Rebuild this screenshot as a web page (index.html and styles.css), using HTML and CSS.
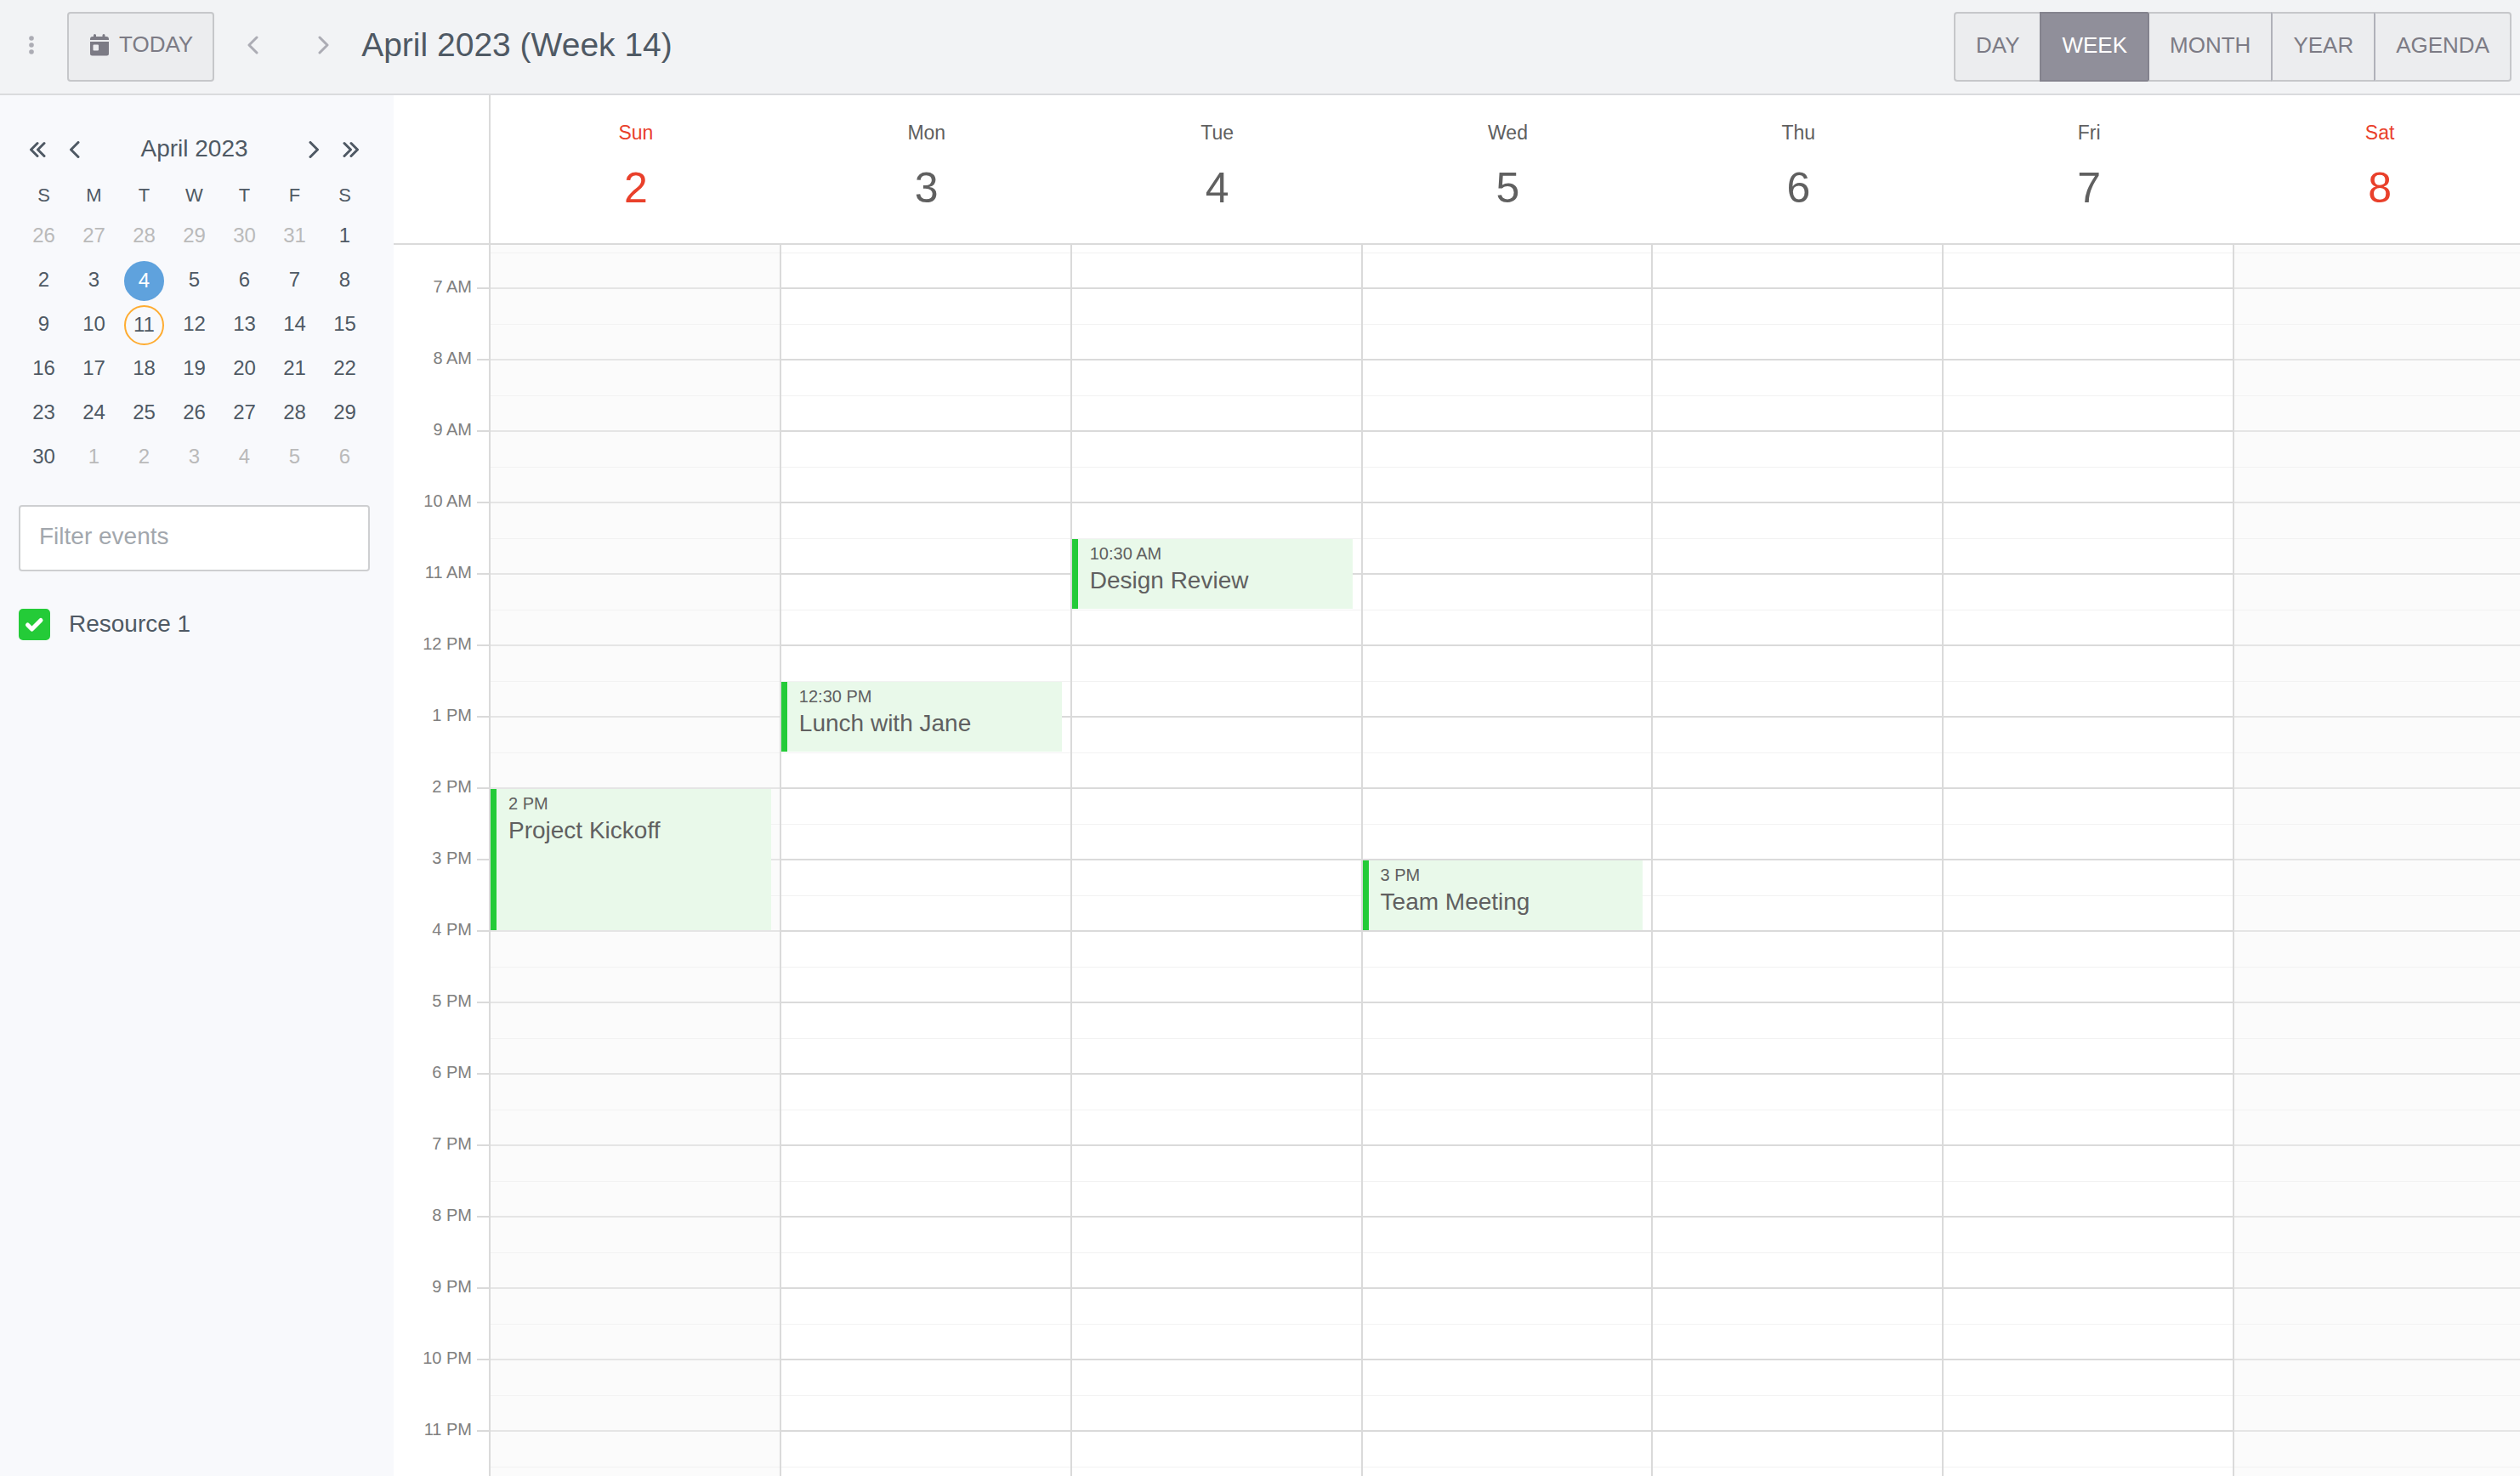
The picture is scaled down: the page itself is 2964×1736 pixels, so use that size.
FILE: index.html
```html
<!DOCTYPE html>
<html lang="en">
<head>
<meta charset="utf-8">
<title>April 2023 (Week 14)</title>
<link rel="stylesheet" href="styles.css">
</head>
<body>
<header class="toolbar">
  <button class="icon-btn menu-btn" type="button" aria-label="Toggle sidebar">
    <svg width="8" height="24" viewBox="0 0 8 24"><circle cx="4" cy="4" r="2.8"/><circle cx="4" cy="12" r="2.8"/><circle cx="4" cy="20" r="2.8"/></svg>
  </button>
  <button class="today-btn" type="button">
    <svg width="22" height="26" viewBox="0 0 22 26"><path fill-rule="evenodd" d="M0 7V6a3 3 0 0 1 3-3h1V1.500a1.500 1.500 0 0 1 3 0V3h7.500V1.500a1.500 1.500 0 0 1 3 0V3H19a3 3 0 0 1 3 3v1zM0 9h22v14a2.500 2.500 0 0 1-2.500 2.500h-17A2.500 2.500 0 0 1 0 23zM4.500 12.500a1 1 0 0 0-1 1v5a1 1 0 0 0 1 1h4.500a1 1 0 0 0 1-1v-5a1 1 0 0 0-1-1z"/></svg>
    <span>TODAY</span>
  </button>
  <button class="icon-btn step-btn" type="button" aria-label="Previous week">
    <svg width="14" height="24" viewBox="0 0 14 24"><path d="M12 3L3 12l9 9"/></svg>
  </button>
  <button class="icon-btn step-btn" type="button" aria-label="Next week">
    <svg width="14" height="24" viewBox="0 0 14 24"><path d="M2 3l9 9-9 9"/></svg>
  </button>
  <h1 class="title">April 2023 (Week 14)</h1>
  <div class="views" role="group" aria-label="View">
    <button type="button">DAY</button>
    <button type="button" class="active" aria-pressed="true">WEEK</button>
    <button type="button">MONTH</button>
    <button type="button">YEAR</button>
    <button type="button">AGENDA</button>
  </div>
</header>
<main class="main">
  <aside class="sidebar">
    <div class="mini-nav">
      <button type="button" aria-label="Previous year"><svg width="20" height="20" viewBox="0 0 20 20"><path d="M10 2.500L2.500 10l7.500 7.500M18 2.500L10.500 10l7.500 7.500"/></svg></button>
      <button type="button" aria-label="Previous month"><svg width="20" height="20" viewBox="0 0 20 20"><path d="M14 1.500L5.500 10l8.500 8.500"/></svg></button>
      <h2>April 2023</h2>
      <button type="button" aria-label="Next month"><svg width="20" height="20" viewBox="0 0 20 20"><path d="M6 1.500L14.500 10l-8.500 8.500"/></svg></button>
      <button type="button" aria-label="Next year"><svg width="20" height="20" viewBox="0 0 20 20"><path d="M2 2.500L9.500 10 2 17.500M10 2.500l7.500 7.500-7.500 7.500"/></svg></button>
    </div>
    <table class="mini-cal">
      <thead><tr><th>S</th><th>M</th><th>T</th><th>W</th><th>T</th><th>F</th><th>S</th></tr></thead>
      <tbody>
        <tr><td class="other">26</td><td class="other">27</td><td class="other">28</td><td class="other">29</td><td class="other">30</td><td class="other">31</td><td>1</td></tr>
        <tr><td>2</td><td>3</td><td><span class="day selected">4</span></td><td>5</td><td>6</td><td>7</td><td>8</td></tr>
        <tr><td>9</td><td>10</td><td><span class="day today">11</span></td><td>12</td><td>13</td><td>14</td><td>15</td></tr>
        <tr><td>16</td><td>17</td><td>18</td><td>19</td><td>20</td><td>21</td><td>22</td></tr>
        <tr><td>23</td><td>24</td><td>25</td><td>26</td><td>27</td><td>28</td><td>29</td></tr>
        <tr><td>30</td><td class="other">1</td><td class="other">2</td><td class="other">3</td><td class="other">4</td><td class="other">5</td><td class="other">6</td></tr>
      </tbody>
    </table>
    <input class="filter" type="text" placeholder="Filter events" aria-label="Filter events">
    <label class="resource">
      <input type="checkbox" checked>
      <svg class="check" width="37" height="37" viewBox="0 0 37 37"><path d="M10.500 19l5 5L26 13.500"/></svg>
      <span>Resource 1</span>
    </label>
  </aside>
  <section class="week">
    <div class="week-head">
      <div class="head-axis"></div>
      <div class="days">
        <div class="head-day weekend"><span>Sun</span><strong>2</strong></div>
        <div class="head-day"><span>Mon</span><strong>3</strong></div>
        <div class="head-day"><span>Tue</span><strong>4</strong></div>
        <div class="head-day"><span>Wed</span><strong>5</strong></div>
        <div class="head-day"><span>Thu</span><strong>6</strong></div>
        <div class="head-day"><span>Fri</span><strong>7</strong></div>
        <div class="head-day weekend"><span>Sat</span><strong>8</strong></div>
      </div>
    </div>
    <div class="week-body">
      <div class="axis">
        <div class="hour"><span>7 AM</span></div>
        <div class="hour"><span>8 AM</span></div>
        <div class="hour"><span>9 AM</span></div>
        <div class="hour"><span>10 AM</span></div>
        <div class="hour"><span>11 AM</span></div>
        <div class="hour"><span>12 PM</span></div>
        <div class="hour"><span>1 PM</span></div>
        <div class="hour"><span>2 PM</span></div>
        <div class="hour"><span>3 PM</span></div>
        <div class="hour"><span>4 PM</span></div>
        <div class="hour"><span>5 PM</span></div>
        <div class="hour"><span>6 PM</span></div>
        <div class="hour"><span>7 PM</span></div>
        <div class="hour"><span>8 PM</span></div>
        <div class="hour"><span>9 PM</span></div>
        <div class="hour"><span>10 PM</span></div>
        <div class="hour"><span>11 PM</span></div>
      </div>
      <div class="days">
        <div class="col weekend"><article class="event" style="grid-row: 16 / span 4"><time>2 PM</time><p>Project Kickoff</p></article></div>
        <div class="col"><article class="event" style="grid-row: 13 / span 2"><time>12:30 PM</time><p>Lunch with Jane</p></article></div>
        <div class="col"><article class="event" style="grid-row: 9 / span 2"><time>10:30 AM</time><p>Design Review</p></article></div>
        <div class="col"><article class="event" style="grid-row: 18 / span 2"><time>3 PM</time><p>Team Meeting</p></article></div>
        <div class="col"></div>
        <div class="col"></div>
        <div class="col weekend"></div>
      </div>
    </div>
  </section>
</main>
</body>
</html>
```
FILE: styles.css
```css
* { box-sizing: border-box; }

body {
  margin: 0;
  min-height: 100vh;
  display: flex;
  flex-direction: column;
  overflow: hidden;
  background: #fff;
  color: #4f5964;
  font-family: "Liberation Sans", Arial, sans-serif;
  font-size: 28px;
}

h1, h2, p { margin: 0; font-weight: 400; }

button {
  border: 0;
  padding: 0;
  background: none;
  color: inherit;
  font: inherit;
}

svg { display: block; flex: none; }

/* Toolbar */
.toolbar {
  display: flex;
  align-items: stretch;
  padding: 14px 10px 14px 0;
  background: #f2f3f5;
  border-bottom: 2px solid #dadbdd;
}

.icon-btn {
  display: flex;
  align-items: center;
  justify-content: center;
  padding-bottom: 4px;
}

.menu-btn { width: 73px; fill: #acacb4; }

.step-btn {
  width: 84px;
  fill: none;
  stroke: #acacb4;
  stroke-width: 3;
  stroke-linecap: round;
  stroke-linejoin: round;
}

.today-btn {
  display: flex;
  align-items: center;
  gap: 12px;
  height: 82px;
  margin: 0 3px 0 6px;
  padding: 0 23px 4px 25px;
  border: 2px solid #c6c7ca;
  border-radius: 4px;
  background: #ecedef;
  color: #7c7b85;
  fill: #7c7b85;
  font-size: 26px;
}

.today-btn span { padding-bottom: 2px; }

.title {
  margin-left: 2px;
  padding-bottom: 4px;
  align-self: center;
  font-size: 39px;
}

.views {
  display: flex;
  margin-left: auto;
  border-radius: 4px;
}

.views button {
  padding: 0 24px 4px;
  border: 2px solid #c6c7ca;
  border-width: 2px 0 2px 2px;
  background: #ecedef;
  color: #7c7b85;
  font-size: 26px;
}

.views button:first-child { border-radius: 4px 0 0 4px; }
.views button:last-child { border-right-width: 2px; border-radius: 0 4px 4px 0; }
.views button.active { background: #908f9a; border-color: #84838e; color: #fff; }
.views button.active + button { border-left-color: #84838e; }
.views button.active ~ button + button { border-left-color: #b0b1b9; }

/* Layout below the toolbar */
.main { flex: 1; display: flex; }

.sidebar {
  flex: none;
  width: 463px;
  padding: 42px 28px 0 22px;
  background: #f8f9fc;
}

/* Month picker */
.mini-nav { display: flex; height: 44px; }

.mini-nav button {
  width: 44px;
  display: flex;
  align-items: center;
  justify-content: center;
  fill: none;
  stroke: #4f5964;
  stroke-width: 3;
  stroke-linecap: round;
  stroke-linejoin: round;
}

.mini-nav h2 {
  flex: 1;
  text-align: center;
  font-size: 28px;
  line-height: 42px;
}

.mini-cal {
  width: 100%;
  table-layout: fixed;
  border-collapse: collapse;
  font-size: 24px;
  text-align: center;
}

.mini-cal th { height: 54px; padding: 10px 0 0; font-size: 22px; font-weight: 400; }
.mini-cal td { height: 52px; padding: 0 0 2px; line-height: 44px; }
.mini-cal .other { color: #bababa; }
.mini-cal td:has(.day) { padding: 0; }

.day {
  display: block;
  width: 47px;
  height: 47px;
  margin: 0 auto;
  border: 2px solid transparent;
  border-radius: 50%;
  line-height: 41px;
}

.day.selected { background: #5fa2dd; border-color: #5fa2dd; color: #fff; }
.day.today { border-color: #feac31; }

/* Filters */
.filter {
  display: block;
  width: 100%;
  height: 78px;
  margin-top: 30px;
  padding: 0 22px 4px;
  border: 2px solid #cecfd1;
  border-radius: 4px;
  background: #fff;
  color: #4f5964;
  font: inherit;
}

.filter::placeholder { color: #a2a7ad; opacity: 1; }

.resource {
  display: grid;
  grid-template-columns: 37px 1fr;
  column-gap: 22px;
  align-items: center;
  margin-top: 44px;
  line-height: 34px;
}

.resource span { padding-bottom: 2px; }

.resource input {
  grid-area: 1 / 1;
  appearance: none;
  width: 37px;
  height: 37px;
  margin: 0;
  border-radius: 5px;
  background: #24cb38;
}

.resource .check {
  grid-area: 1 / 1;
  z-index: 1;
  fill: none;
  stroke: #fff;
  stroke-width: 5;
  stroke-linecap: round;
  stroke-linejoin: round;
  pointer-events: none;
}

/* Week view */
.week {
  flex: 1;
  min-width: 0;
  display: flex;
  flex-direction: column;
  overflow: hidden;
}

.week-head { display: flex; border-bottom: 2px solid #dadada; }
.week-body { flex: 1; display: flex; }
.head-axis, .axis { flex: none; width: 114px; border-right: 2px solid #dadada; }

/* the day columns run slightly under the right edge */
.days {
  flex: 1;
  display: grid;
  grid-template-columns: repeat(7, 1fr);
  margin-right: -6px;
}

.head-day {
  display: flex;
  flex-direction: column;
  align-items: center;
  gap: 21px;
  padding: 30px 0 35px;
  color: #606060;
  font-size: 23px;
  line-height: 28px;
}

.head-day strong { font-size: 50px; font-weight: 400; line-height: 60px; }
.head-day.weekend { color: #e9402b; }

.axis { padding-top: 9px; }

.hour {
  display: flex;
  align-items: center;
  justify-content: flex-end;
  gap: 6px;
  height: 84px;
  color: #808080;
  font-size: 20px;
}

.hour span { padding-bottom: 4px; }
.hour::after { content: ""; width: 14px; height: 2px; background: #dadada; }

.col {
  --line: #dadada;
  --half: #f2f2f2;
  display: grid;
  grid-auto-rows: 42px;
  align-content: start;
  padding: 10px 10px 0 0;
  border-right: 2px solid #dadada;
  background-image: linear-gradient(var(--line) 2px, transparent 2px 43px, var(--half) 43px 44px, transparent 44px);
  background-size: 100% 84px;
  background-position: 0 50px;
}

.col.weekend { --line: #e5e5e5; background-color: #fbfbfb; }

.event {
  margin-bottom: 2px;
  padding: 4px 0 0 14px;
  border-left: 7px solid #24cb38;
  background: #e9f9ea;
  color: #606060;
}

.event time { display: block; font-size: 20px; line-height: 26px; }
.event p { line-height: 38px; white-space: nowrap; }
```
